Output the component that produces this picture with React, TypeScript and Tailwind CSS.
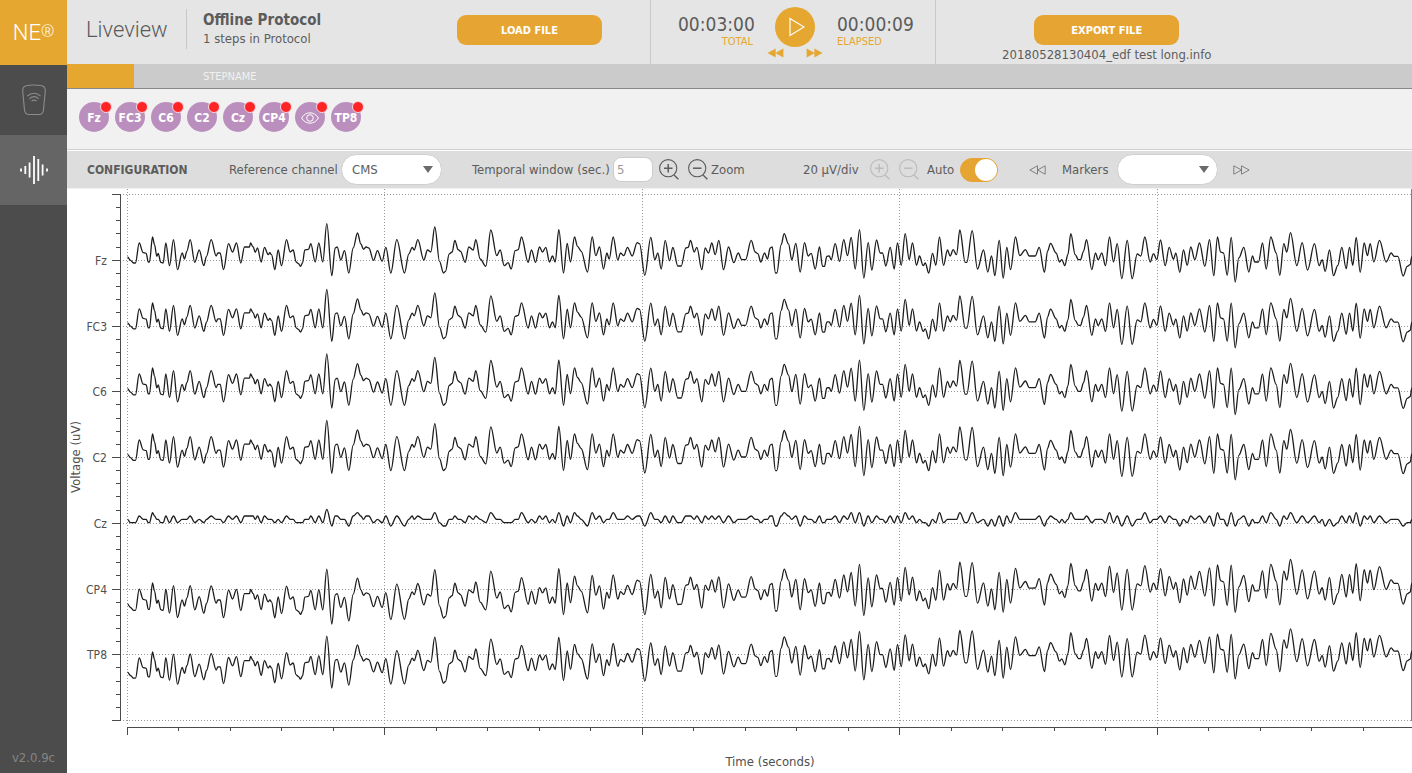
import React, { useState } from 'react';

type Channel = {
  name: string;
  gain: number;
  // offset from the channel's own axis at a few points in time
  drift: [number, number][];
  step?: number;
};

const CHANNELS: Channel[] = [
  { name: 'Fz', gain: 1, drift: [[0, 0]] },
  { name: 'FC3', gain: 1, drift: [[0, 0]] },
  { name: 'C6', gain: 1.04, drift: [[0, 0]] },
  { name: 'C2', gain: 1.02, drift: [[0, 0]] },
  { name: 'Cz', gain: 0.3, drift: [[0, 5]], step: 10 },
  { name: 'CP4', gain: 1.06, drift: [[0, 54], [600, 56], [1545, 28], [2200, 22], [2950, 4], [3855, -6]] },
  { name: 'TP8', gain: 1, drift: [[0, 62], [600, 54], [1545, 34], [2200, 22], [2950, 12], [3855, 0]] },
];

const ELECTRODES = ['Fz', 'FC3', 'C6', 'C2', 'Cz', 'CP4', 'EOG', 'TP8'];

const ZERO_LEVEL = 217;
const MEAN_LEVEL = 200;
const BLOCKS = [
  {
    start: -181,
    samples:
      '181,207 190,217 199,225 205,225 216,165 228,194 237,196 243,222 247,222 256,147 262,170 269,205 273,196 281,223 288,225 296,165 307,233 319,155 331,245 345,195 352,213 359,190 369,155 383,223 396,186 410,233 418,205 432,155 447,204 452,195 459,195 469,245 484,167 496,192 508,165 521,225 532,177 547,177 550,165 558,177 564,193 571,180 582,222 592,178 603,200 608,194 613,200 623,245 633,186 643,233 658,155 669,192 678,186 687,222 694,227 700,235 706,225 713,186 724,184 731,167 744,222 755,165 767,222 779,107 794,263 804,180 810,177 821,216 832,188 845,255 858,180 871,135 881,168 889,184 897,177 905,180 919,217 931,188 945,220 956,178',
  },
  {
    start: 788,
    samples:
      '2,255 20,155 43,255 56,198 66,178 72,186 83,155 101,216 112,186 122,192 134,117 148,220 160,255 166,250 177,198 186,192 194,157 204,185 211,190 225,223 236,177 249,186 257,155 270,213 287,235 302,126 320,203 330,186 342,233 354,224 363,243 375,188 384,185 394,147 414,223 424,186 436,223 448,177 457,192 467,178 478,222 487,204 495,222 506,125 520,255 531,166 541,222 553,147 562,175 573,190 592,252 606,147 617,203 628,177 640,243 650,195 657,213 669,147 683,216 691,195 701,203 712,178 726,204 741,164 748,167 764,262 782,148 794,215 803,195 813,243 825,157 838,218 848,178 863,234 873,234 887,180 894,178 901,157 912,192 920,178 935,245 945,180 955,195',
  },
  {
    start: 1748,
    samples:
      '5,165 15,200 26,157 40,245 55,177 71,224 84,195 95,215 106,215 123,157 135,192 143,197 152,222 163,195 172,213 180,180 186,177 196,255 200,255 213,170 222,137 235,168 245,216 257,166 270,252 283,164 294,204 303,196 315,243 328,177 337,235 343,235 350,205 357,204 363,215 375,167 388,220 401,155 412,203 423,148 435,243 448,125 461,270 474,164 485,246 499,156 510,195 517,195 527,234 540,178 552,243 562,165 573,232 585,137 597,215 607,165 619,232 628,204 639,233 645,225 656,255 667,196 677,232 688,147 700,232 712,186 720,204 729,185 739,200 749,126 765,223 770,223 786,128 802,243 820,186 833,252 844,204 854,263 867,157 879,270 890,178 901,245 916,147 929,203 946,185 957,204 975,204',
  },
  {
    start: 2708,
    samples:
      '27,178 43,253 52,190 61,166 78,195 88,222 95,215 104,233 113,200 122,137 135,200 145,215 151,215 160,190 169,155 185,245 196,195 204,215 215,195 226,233 238,147 250,222 261,167 275,272 291,157 306,272 321,198 332,204 344,147 360,222 370,197 380,215 391,156 405,233 417,178 430,214 437,195 449,253 460,186 471,232 482,177 494,215 508,165 524,235 538,155 551,263 562,147 571,192 580,195 591,262 603,148 615,282 626,210 641,178 656,252 667,204 674,222 685,222 697,165 708,243 722,147 738,195 749,262 761,167 770,192 781,134 800,233 816,164 832,246 853,167 867,233 876,215 885,250 898,186 910,263 923,232 935,178 948,242 958,178 968,232 978,148 990,253 1002,165 1012,203 1020,167 1031,222 1048,157 1068,222 1083,195 1092,205 1103,205 1119,264 1131,235 1140,230 1145,205',
  },
];

const SIGNAL: [number, number][] = BLOCKS.flatMap(({ start, samples }) =>
  samples.split(' ').map((pair): [number, number] => {
    const [t, level] = pair.split(',').map(Number);
    return [start + t, level];
  }),
);

const PLOT_LEFT = 60;
const PLOT_RIGHT = 1344;
const PLOT_TOP = 5;
const ROW = 65.75;
const SECOND = 257.5;

function driftAt(drift: [number, number][], t: number) {
  for (let i = 1; i < drift.length; i++) {
    const [t0, d0] = drift[i - 1];
    const [t1, d1] = drift[i];
    if (t <= t1) return d0 + ((d1 - d0) * (t - t0)) / (t1 - t0);
  }
  return drift[drift.length - 1][1];
}

function tracePath({ gain, drift, step }: Channel, axisY: number) {
  const points = SIGNAL.map(([t, level]) => {
    let swing = (level - MEAN_LEVEL) * gain;
    if (step) swing = Math.round(swing / step) * step;
    const y = axisY + (MEAN_LEVEL - ZERO_LEVEL + swing + driftAt(drift, t)) / 3;
    return [PLOT_LEFT + 0.5 + t / 3, y];
  });
  let d = `M${points[0][0].toFixed(1)} ${points[0][1].toFixed(1)}`;
  for (let i = 1; i < points.length; i++) {
    const [x0, y0] = points[i - 1];
    const [x1, y1] = points[i];
    const bend = (x1 - x0) * 0.35;
    d += `C${(x0 + bend).toFixed(1)} ${y0.toFixed(1)} ${(x1 - bend).toFixed(1)} ${y1.toFixed(1)} ${x1.toFixed(1)} ${y1.toFixed(1)}`;
  }
  return d;
}

const Plot: React.FC = () => {
  const rows = Array.from({ length: 9 }, (_, i) => Math.round(PLOT_TOP + i * ROW) + 0.5);
  const seconds = Array.from({ length: 5 }, (_, i) => Math.floor(PLOT_LEFT + i * SECOND) + 0.5);
  const yTicks = Array.from({ length: 41 }, (_, i) => i);
  const xTicks = Array.from({ length: 25 }, (_, i) => i);

  return (
    <svg viewBox="0 0 1345 584" className="block w-full" role="img" aria-label="Voltage over time">
      <g stroke="#989898" strokeDasharray="1 2" shapeRendering="crispEdges">
        {rows.map((y) => (
          <line key={y} x1={56} x2={PLOT_RIGHT} y1={y} y2={y} />
        ))}
        {seconds.map((x) => (
          <line key={x} x1={x} x2={x} y1={0} y2={535} />
        ))}
      </g>
      <g stroke="#4a4a4a" shapeRendering="crispEdges">
        <line x1={53.5} x2={53.5} y1={5} y2={532} />
        {yTicks.map((i) => {
          const y = Math.round(PLOT_TOP + (i * ROW) / 5) + 0.5;
          return <line key={i} x1={i % 5 ? 49 : 45} x2={53} y1={y} y2={y} />;
        })}
        <line x1={60} x2={1345} y1={538.5} y2={538.5} />
        {xTicks.map((i) => {
          const x = Math.floor(PLOT_LEFT + (i * SECOND) / 5) + 0.5;
          return <line key={i} x1={x} x2={x} y1={539} y2={i % 5 ? 542 : 546} />;
        })}
      </g>
      <line x1={1344.5} x2={1344.5} y1={0} y2={532} stroke="#808080" />
      <g fill="none" stroke="#1c1c1c" strokeWidth="1.3" strokeLinejoin="round">
        {CHANNELS.map((channel, i) => (
          <path key={channel.name} d={tracePath(channel, PLOT_TOP + 0.6 + (i + 1) * ROW)} />
        ))}
      </g>
      <g fill="#505050">
        <g fontSize="12">
          {CHANNELS.map((channel, i) => (
            <text key={channel.name} x={40} y={Math.round(PLOT_TOP + (i + 1) * ROW) + 5} textAnchor="end">
              {channel.name}
            </text>
          ))}
        </g>
        <g fontSize="13">
          <text transform="translate(13 268) rotate(-90)" textAnchor="middle">Voltage (uV)</text>
          <text x={703} y={577} textAnchor="middle">Time (seconds)</text>
        </g>
      </g>
    </svg>
  );
};

const Magnifier: React.FC<{ minus?: boolean }> = ({ minus }) => (
  <svg viewBox="0 0 20 21" className="h-[21px] w-5" fill="none" stroke="currentColor" aria-hidden="true">
    <circle cx="9.2" cy="9.2" r="8.6" strokeWidth="1.1" />
    <path d="M15 16l4.4 4.2" strokeWidth="1.4" />
    <path d={minus ? 'M5 9.2h8.5' : 'M5 9.2h8.5M9.2 5v8.5'} strokeWidth="1.5" />
  </svg>
);

const Skip: React.FC<{ forward?: boolean; filled?: boolean }> = ({ forward, filled }) => (
  <svg
    viewBox="0 0 17 10"
    className={forward ? 'h-[10px] w-[17px] -scale-x-100' : 'h-[10px] w-[17px]'}
    fill={filled ? 'currentColor' : 'none'}
    stroke="currentColor"
    strokeWidth={filled ? 0.3 : 1}
    aria-hidden="true"
  >
    <path d="M8.5 .8v8.4L.8 5zM16.2 .8v8.4L8.5 5z" />
  </svg>
);

const PillSelect: React.FC<{ id: string; options: string[] }> = ({ id, options }) => (
  <div className="relative">
    <select
      id={id}
      className="block h-[31px] w-[101px] appearance-none rounded-full border border-[#cfcfcf] bg-white pl-[10px] text-[13px] text-[#5c5c5c]"
    >
      {options.map((option) => (
        <option key={option}>{option}</option>
      ))}
    </select>
    <svg viewBox="0 0 10 7" className="pointer-events-none absolute top-3 right-[9px] h-[7px] w-[10px]" aria-hidden="true">
      <path d="M0 0h10L5 7z" fill="#6b6b6b" />
    </svg>
  </div>
);

const Sidebar: React.FC = () => (
  <nav className="flex w-[67px] shrink-0 flex-col bg-[#4c4c4c]">
    <a href="#home" className="flex h-[65px] items-center justify-center bg-[#e5a72f] text-white">
      <span className="font-[Roboto] text-[22px] font-light">NE</span>
      <span className="mb-1 font-['Noto_Sans'] text-base font-light">®</span>
    </a>
    <button aria-label="Device" className="flex h-[70px] items-center justify-center text-[#8c8c8c]">
      <svg viewBox="0 0 26 32" className="h-8 w-[26px]" fill="none" stroke="currentColor" strokeWidth="1.1">
        <path d="M6.500 1.500C9 .8 17 .8 19.500 1.500c3.600 .4 5 2.500 4.800 5.500L22.500 26c-.3 3-1.700 4.500-4.500 4.500H8C5.200 30.500 3.800 29 3.500 26L1.700 7C1.500 4 2.900 1.900 6.500 1.500z" />
        <path d="M6.300 12.200c4-4 9.400-4 13.400 0M8.300 14.800c3-2.800 6.400-2.800 9.400 0M10.500 17.200c1.700-1.500 3.300-1.500 5 0" />
      </svg>
    </button>
    <button aria-label="Signals" className="flex h-[70px] items-center justify-center bg-[#656565] text-white">
      <svg viewBox="0 0 28 28" className="size-7" stroke="currentColor" strokeWidth="1.800">
        <path d="M1 12.500v3M5.300 10v8M9.600 6.500v15M14 0v28M18.300 3v22M22.600 8.500v11M27 12.500v3" />
      </svg>
    </button>
    <span className="mt-auto pb-[7px] text-center text-[13px] leading-4 text-[#858585]">v2.0.9c</span>
  </nav>
);

const Header: React.FC = () => (
  <header className="grid h-16 grid-cols-[583fr_286fr_476fr] bg-[#e5e5e5]">
    <div className="flex pl-[19px]">
      <h1 className="w-[100px] pt-4 font-[Roboto] text-[22px] leading-7 font-light text-[#5a5a5a]">Liveview</h1>
      <div className="mt-[9px] h-10 border-l border-[#c8c8c8] pt-px pl-4">
        <h2 className="text-[15px] leading-5 font-bold whitespace-nowrap">Offline Protocol</h2>
        <p className="text-[13px] leading-[18px] whitespace-nowrap">1 steps in Protocol</p>
      </div>
      <button className="mt-[15px] mr-12 ml-auto h-[30px] w-[145px] rounded-[9px] bg-[#e6a532] pt-[2px] text-[11px] font-bold text-white">
        LOAD FILE
      </button>
    </div>

    <div className="flex justify-center gap-[14px] border-x border-[#c9c9c9]">
      <div className="w-[75px] pt-3 text-right">
        <p className="text-[19px] leading-6">00:03:00</p>
        <p className="text-[11px] leading-3 text-[#e5a72f]">TOTAL</p>
      </div>
      <div className="w-14 pt-[7px] text-[#e5a72f]">
        <button aria-label="Play" className="mx-auto flex size-10 items-center justify-center rounded-full bg-[#e5a72f] text-white">
          <svg viewBox="0 0 16 20" className="ml-1 h-5 w-4" fill="none" stroke="currentColor" strokeWidth="1.200">
            <path d="M1 1.500v17L15 10z" />
          </svg>
        </button>
        <div className="mt-[1px] flex justify-between">
          <button aria-label="Rewind"><Skip filled /></button>
          <button aria-label="Fast forward"><Skip filled forward /></button>
        </div>
      </div>
      <div className="w-[71px] pt-3">
        <p className="text-[19px] leading-6">00:00:09</p>
        <p className="text-[11px] leading-3 text-[#e5a72f]">ELAPSED</p>
      </div>
    </div>

    <div className="flex flex-col items-start pt-[15px] pl-[66px]">
      <div className="flex flex-col items-center">
        <button className="h-[30px] w-[145px] rounded-[9px] bg-[#e6a532] pt-[2px] text-[11px] font-bold text-white">
          EXPORT FILE
        </button>
        <p className="text-[13px] leading-5 whitespace-nowrap">20180528130404_edf test long.info</p>
      </div>
    </div>
  </header>
);

const ElectrodeBar: React.FC = () => (
  <div className="flex h-[61px] gap-[6px] border-b border-[#cfcfcf] bg-[#f1f1f1] pt-[13px] pl-3">
    {ELECTRODES.map((name) => (
      <button
        key={name}
        aria-label={name}
        className="relative flex size-[30px] items-center justify-center rounded-full bg-[#bb8fbd] text-[12px] font-bold text-white"
      >
        {name === 'EOG' ? (
          <svg viewBox="0 0 18 12" className="mt-[2px] h-3 w-[18px]" fill="none" stroke="currentColor">
            <path d="M.6 6C4.500-.9 13.500-.9 17.400 6 13.500 12.900 4.500 12.900 .6 6z" />
            <circle cx="9" cy="6" r="3.300" />
          </svg>
        ) : (
          <span className="mt-[2px]">{name}</span>
        )}
        <span className="absolute -top-[1px] -right-[3px] size-3 rounded-full border border-[#f6d5e0] bg-[#fd2525]" />
      </button>
    ))}
  </div>
);

const ConfigBar: React.FC = () => {
  const [auto, setAuto] = useState(true);
  const [temporalWindow, setTemporalWindow] = useState('5');

  return (
    <div className="flex h-[39px] items-center border-t border-b border-t-white border-b-[#f0f0f0] bg-[#dddddd] pl-5 text-[13px] whitespace-nowrap">
      <h2 className="w-[142px] text-[12px] font-bold">CONFIGURATION</h2>
      <label htmlFor="reference" className="w-28">Reference channel</label>
      <PillSelect id="reference" options={['CMS']} />
      <label htmlFor="window" className="ml-[30px] w-[141px]">Temporal window (sec.)</label>
      <input
        id="window"
        value={temporalWindow}
        onChange={(e) => setTemporalWindow(e.target.value)}
        className="h-[25px] w-10 rounded-lg border border-[#cccccc] bg-white pl-[3px] text-[#999999]"
      />
      <button aria-label="Zoom in" className="ml-[6px]"><Magnifier /></button>
      <button aria-label="Zoom out" className="ml-[9px]"><Magnifier minus /></button>
      <span className="ml-[3px] w-[92px]">Zoom</span>
      <span className="w-[67px]">20 µV/div</span>
      <button aria-label="Increase scale" disabled className="text-[#bcbcbc]"><Magnifier /></button>
      <button aria-label="Decrease scale" disabled className="ml-[9px] text-[#bcbcbc]"><Magnifier minus /></button>
      <label htmlFor="auto" className="ml-2 w-[33px]">Auto</label>
      <input
        id="auto"
        type="checkbox"
        role="switch"
        checked={auto}
        onChange={(e) => setAuto(e.target.checked)}
        className="flex h-6 w-[38px] appearance-none items-center rounded-full border border-[#e6a532] bg-[#b5b5b5] before:size-[22px] before:rounded-full before:bg-white checked:justify-end checked:bg-[#e6a532]"
      />
      <button aria-label="Previous marker" className="ml-[31px] text-[#808080]"><Skip /></button>
      <label htmlFor="markers" className="ml-4 w-[55px]">Markers</label>
      <PillSelect id="markers" options={['']} />
      <button aria-label="Next marker" className="ml-[15px] text-[#808080]"><Skip forward /></button>
    </div>
  );
};

const App: React.FC = () => {
  return (
    <div className="flex min-h-screen bg-white font-['DejaVu_Sans_Condensed','Noto_Sans',sans-serif] text-[#5c5c5c]">
      <Sidebar />
      <main className="min-w-0 flex-1">
        <Header />
        <div className="flex h-[25px] items-center border-b border-[#888888] bg-[#cbcbcb] text-[11px] text-[#f1f1f1]">
          <div className="mr-[69px] h-full w-[67px] bg-[#e5a72f]" />
          <span className="pt-[2px]">STEPNAME</span>
        </div>
        <ElectrodeBar />
        <ConfigBar />
        <Plot />
      </main>
    </div>
  );
};

export default App;
